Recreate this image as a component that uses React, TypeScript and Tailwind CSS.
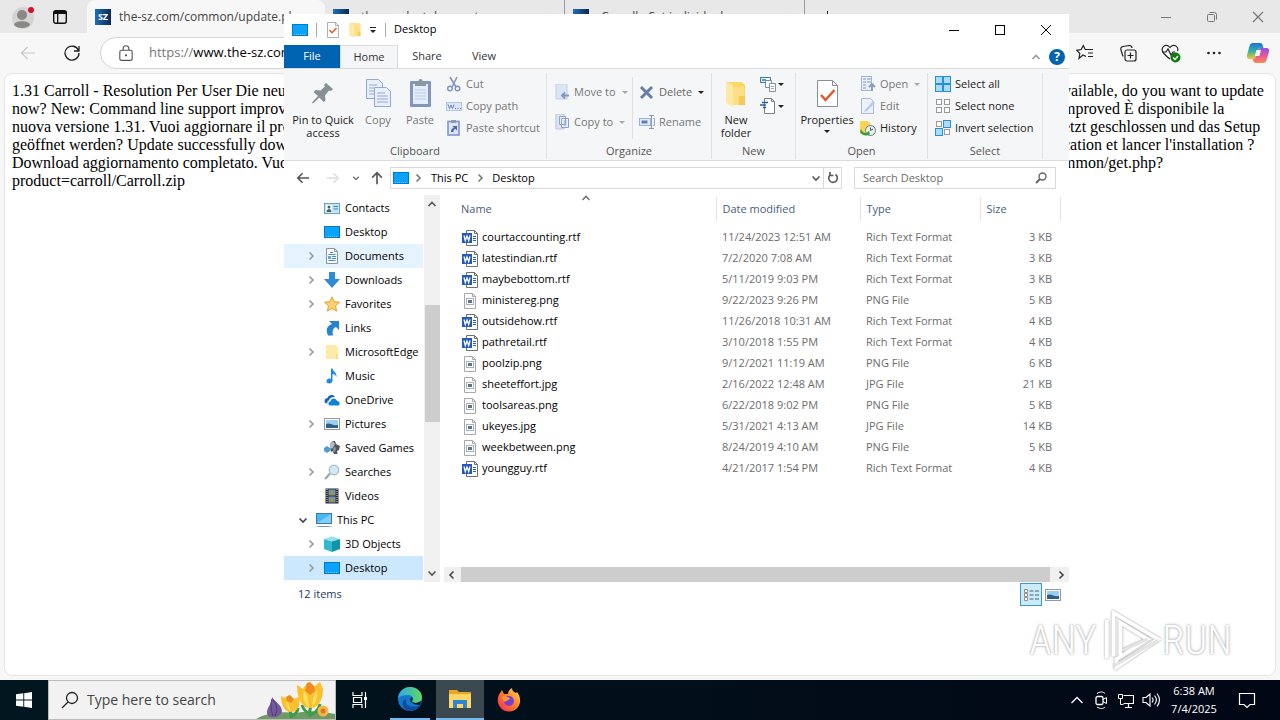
import type { ReactNode } from "react";

type IconProps = { size?: number; className?: string };

const Svg = ({ size = 16, className = "", box = 16, children }: IconProps & { box?: number; children: ReactNode }) => (
  <svg width={size} height={size} viewBox={`0 0 ${box} ${box}`} fill="none" className={`shrink-0 ${className}`} aria-hidden="true">
    {children}
  </svg>
);

const DesktopIcon = (p: IconProps) => (
  <Svg {...p}>
    <rect x="0.5" y="2.5" width="15" height="11" fill="#0aa3fb" stroke="#0078cf" />
    <path d="M2 12.5h12" stroke="#7cc8fb" strokeDasharray="1 1" />
  </Svg>
);

const ContactsIcon = () => (
  <Svg>
    <rect x="0.5" y="3.5" width="15" height="10" fill="#c5e4f5" stroke="#6aa6c4" />
    <rect x="2" y="5" width="6" height="7" fill="#fff" />
    <circle cx="5" cy="7" r="1.5" fill="#3b6a66" />
    <path d="M2.500 12c0-4 5-4 5 0z" fill="#3b6a66" />
    <path d="M9.500 6.500h4.500M9.500 9h4.500" stroke="#3f85b0" />
  </Svg>
);

const DocumentIcon = () => (
  <Svg>
    <path d="M2.500 .5h8l3 3v12h-11z" fill="#fff" stroke="#8b949b" />
    <path d="M10.500 .5v3h3" stroke="#8b949b" />
    <path d="M6 4.500h3M4.500 6.500h7M8 8.500h4M8 10.500h4M4.500 12.500h7" stroke="#3d8fc8" />
    <rect x="4" y="8" width="3" height="3" fill="#5fa9d4" />
  </Svg>
);

const DownloadIcon = () => (
  <Svg>
    <path d="M5 0h6v7h5l-8 9L0 7h5z" fill="#2f8ad8" />
  </Svg>
);

const StarIcon = () => (
  <Svg>
    <path d="m8 .8 2.200 4.900 5.300.6-4 3.500 1.100 5.300L8 12.400l-4.600 2.700 1.100-5.300-4-3.500 5.300-.6z" fill="#ffd26b" stroke="#e39a3a" />
  </Svg>
);

const LinkIcon = () => (
  <Svg>
    <path d="M5 1h10v9l-3-3c-3 1-4 4-3 8.500H4C1.500 10 3 5.500 8 4z" fill="#2583d2" />
  </Svg>
);

const FolderIcon = ({ size = 16, className = "" }: IconProps) => (
  <Svg size={size} className={className}>
    <path d="M2.500 1H12l1.500 1.500V14h-11z" fill="#ffe08a" />
    <path d="M2.500 1 7 3v12.500L2.500 14z" fill="#ffe9a8" />
    <path d="M10.500 9.500h3V14h-3z" fill="#f7cb58" />
  </Svg>
);

const PaleFolderIcon = () => (
  <Svg>
    <path d="M2 1h10l1 1h1v13H2z" fill="#fbeaa8" />
    <path d="M12 10h2v5h-2z" fill="#f5dc86" />
  </Svg>
);

const MusicIcon = () => (
  <Svg>
    <path d="M7 .5h1.500c.5 3 4.500 4 4 8.500-1-2-2-2.800-4-3v6.500c0 4-6 3.800-6 .8C2.500 11 5 10 7 11z" fill="#1a8be0" />
  </Svg>
);

const OneDriveIcon = () => (
  <Svg>
    <path d="M1 11c-1.500-3 1-5 2.500-5C4.500 2.500 9.500 2 11 5 8 4.500 5.500 6 5 8.500 3.500 9 3 10 3.500 11.500z" fill="#1168b8" />
    <path d="M5.500 13.500C3.500 12 4.500 9.500 6.500 9.300 7 5.500 12 5.500 13 9c3 .3 3.500 3.500 1.500 4.500z" fill="#1184d8" />
  </Svg>
);

const PictureIcon = () => (
  <Svg>
    <rect x="0.5" y="2.500" width="15" height="11" fill="#fff" stroke="#8f9aa5" />
    <rect x="2" y="4" width="12" height="8" fill="#9ad0f4" />
    <path d="M2 8c4-2 6 2 12 1v3H2z" fill="#2f5f82" />
  </Svg>
);

const GamesIcon = () => (
  <Svg>
    <path d="M8 1h3l1 3 4 2-1 4-2 1 .5 3H10l-1.500-3-1.500 1-1-4z" fill="#4b565e" />
    <path d="m6 3 3-2 2 3-2 4-3 1z" fill="#aebbc3" />
    <path d="M0 8l3-2 3 2v3l-3 2-3-2z" fill="#4ba0d8" />
    <path d="m9 8 3-1-.5 4-2 2z" fill="#8b979e" />
  </Svg>
);

const LensIcon = () => (
  <Svg>
    <path d="M1 15 6 9.500" stroke="#98a3a8" strokeWidth="2" />
    <circle cx="10" cy="6" r="4.800" fill="#cfeafb" stroke="#94a9b5" />
  </Svg>
);

const VideoIcon = () => (
  <Svg>
    <rect x="1.500" y="0.500" width="13" height="15" fill="#2d2d2d" />
    <path d="M3 1v14M13 1v14" stroke="#e6e6e6" strokeDasharray="1 1" />
    <rect x="4.500" y="1.500" width="7" height="6" fill="#6f93bb" />
    <rect x="4.500" y="8.500" width="7" height="6" fill="#6f93bb" />
    <path d="m5 7 3-4 3 4zM5 14l3-4 3 4z" fill="#a8903e" />
  </Svg>
);

const PcIcon = () => (
  <Svg>
    <rect x="0.5" y="1.500" width="15" height="10" fill="#46b8f5" stroke="#42799b" />
    <path d="M1 11 15 2v9z" fill="#7dd0fb" />
    <path d="M3 14.500h10" stroke="#6c98b0" />
    <path d="M0 14.500h3M13 14.500h3" stroke="#b4c8d2" />
  </Svg>
);

const CubeIcon = () => (
  <Svg>
    <path d="M0 3 8 .5 16 3 8 5.500z" fill="#8fe4ee" />
    <path d="M0 3 8 5.500V16l-8-3z" fill="#31b9cc" />
    <path d="M16 3 8 5.500V16l8-3z" fill="#0e93ab" />
  </Svg>
);

const WordIcon = () => (
  <Svg>
    <path d="M4.500 .5h8l3 3v12h-11z" fill="#fff" stroke="#6a7076" />
    <path d="M12.500 .5v3h3" stroke="#6a7076" />
    <path d="M11 6.500h3M11 8.500h3M11 10.500h3" stroke="#2b5fb4" />
    <rect x="0" y="3" width="10" height="10" fill="#2459b5" />
    <path d="m2 5.500 1.300 5L5 6l1.700 4.500L8 5.500" stroke="#fff" strokeWidth="1.300" />
  </Svg>
);

const ImageFileIcon = () => (
  <Svg>
    <path d="M2.500 .5h8l3 3v12h-11z" fill="#fbfbfb" stroke="#a9a9a9" />
    <path d="M10.500 .5v3h3" stroke="#a9a9a9" />
    <rect x="4.500" y="5.500" width="7" height="6" fill="#fff" stroke="#a9b1ba" />
    <rect x="6" y="7" width="4" height="3" fill="#5f7584" />
  </Svg>
);

const Chevron = ({ dir, className = "" }: { dir: "up" | "down" | "left" | "right"; className?: string }) => {
  const paths = { up: "M1.500 7 5 3.500 8.500 7", down: "M1.500 3.500 5 7l3.500-3.500", left: "M6.500 1.500 3 5l3.500 3.500", right: "M3.500 1.500 7 5 3.500 8.500" };
  return (
    <Svg size={10} box={10} className={className}>
      <path d={paths[dir]} stroke="currentColor" strokeWidth="1.600" />
    </Svg>
  );
};

const Caret = ({ className = "" }: { className?: string }) => (
  <svg width="6" height="3" viewBox="0 0 6 3" className={`shrink-0 ${className}`} aria-hidden="true">
    <path d="M0 0h6L3 3z" fill="currentColor" />
  </svg>
);

const CheckedPage = ({ size, className }: IconProps) => (
  <Svg size={size} className={className}>
    <path d="M2.500 .5h8l3 3v12h-11z" fill="#fff" stroke="#8a8f95" strokeWidth=".7" />
    <path d="M10.500 .5v3h3" stroke="#8a8f95" strokeWidth=".7" />
    <path d="m4.500 8 2.500 2.800L11.500 6" stroke="#e4572a" strokeWidth="1.400" />
  </Svg>
);

const PropertiesIcon = () => (
  <Svg size={32} box={32} className="mb-1">
    <path d="M6.500 3.500h15l5 5v21h-20z" fill="#fff" stroke="#8a8f95" />
    <path d="M21.500 3.500v5h5" stroke="#8a8f95" />
    <path d="m10 18 4.500 5 9-10" stroke="#e4572a" strokeWidth="2.500" />
  </Svg>
);

const SzIcon = () => (
  <span className="flex size-4 shrink-0 items-center justify-center bg-linear-to-r from-[#1d6fb8] to-[#0b2a55] text-[9px] font-bold text-white">SZ</span>
);

const CopilotIcon = () => (
  <Svg size={24} box={24}>
    <defs>
      <linearGradient id="copA" x1="0" y1="0" x2="0" y2="1">
        <stop offset="0" stopColor="#1d6fe0" />
        <stop offset=".5" stopColor="#2fb3a0" />
        <stop offset="1" stopColor="#f5c52c" />
      </linearGradient>
      <linearGradient id="copB" x1="0" y1="0" x2="0" y2="1">
        <stop offset="0" stopColor="#8a55e8" />
        <stop offset=".5" stopColor="#e8559c" />
        <stop offset="1" stopColor="#fb8a4c" />
      </linearGradient>
    </defs>
    <path d="M7 2h7c2 0 2.500 1 3 3l.5 2h-3c-2 0-2.500 1-3 3L10 15c-.5 2-1.500 3-3.500 3H4c-3 0-3.500-2-3-4L3.500 5C4 3 5 2 7 2z" fill="url(#copA)" />
    <path d="M17 22h-7c-2 0-2.500-1-3-3l-.3-1c2 0 2.800-1 3.300-3l1.500-5c.5-2 1.500-3 3.500-3h5c3 0 3.500 2 3 4l-2.500 8c-.5 2-1.500 3-3.500 3z" fill="url(#copB)" />
    <path d="m10.500 9-1.700 6h4.500l1.700-6z" fill="#fff" />
  </Svg>
);

const PAGE_LINES = [
  ["1.31 Carroll - Resolution Per User Die neue", "vailable, do you want to update"],
  ["now? New: Command line support improved", "mproved È disponibile la"],
  ["nuova versione 1.31. Vuoi aggiornare il pro", "etzt geschlossen und das Setup"],
  ["geöffnet werden? Update successfully down", "cation et lancer l'installation ?"],
  ["Download aggiornamento completato. Vuoi", "mmon/get.php?"],
  ["product=carroll/Carroll.zip", ""],
];

const TREE: { name: string; icon: ReactNode; arrow?: boolean; state?: string }[] = [
  { name: "Contacts", icon: <ContactsIcon /> },
  { name: "Desktop", icon: <DesktopIcon /> },
  { name: "Documents", icon: <DocumentIcon />, arrow: true, state: "bg-[#e5f3ff]" },
  { name: "Downloads", icon: <DownloadIcon />, arrow: true },
  { name: "Favorites", icon: <StarIcon />, arrow: true },
  { name: "Links", icon: <LinkIcon /> },
  { name: "MicrosoftEdge", icon: <PaleFolderIcon />, arrow: true },
  { name: "Music", icon: <MusicIcon /> },
  { name: "OneDrive", icon: <OneDriveIcon /> },
  { name: "Pictures", icon: <PictureIcon />, arrow: true },
  { name: "Saved Games", icon: <GamesIcon /> },
  { name: "Searches", icon: <LensIcon />, arrow: true },
  { name: "Videos", icon: <VideoIcon /> },
];

const DRIVE_TREE = [
  { name: "3D Objects", icon: <CubeIcon />, state: "" },
  { name: "Desktop", icon: <DesktopIcon />, state: "bg-[#cce8ff]" },
];

const FILES = [
  ["courtaccounting.rtf", "11/24/2023 12:51 AM", "3 KB"],
  ["latestindian.rtf", "7/2/2020 7:08 AM", "3 KB"],
  ["maybebottom.rtf", "5/11/2019 9:03 PM", "3 KB"],
  ["ministereg.png", "9/22/2023 9:26 PM", "5 KB"],
  ["outsidehow.rtf", "11/26/2018 10:31 AM", "4 KB"],
  ["pathretail.rtf", "3/10/2018 1:55 PM", "4 KB"],
  ["poolzip.png", "9/12/2021 11:19 AM", "6 KB"],
  ["sheeteffort.jpg", "2/16/2022 12:48 AM", "21 KB"],
  ["toolsareas.png", "6/22/2018 9:02 PM", "5 KB"],
  ["ukeyes.jpg", "5/31/2021 4:13 AM", "14 KB"],
  ["weekbetween.png", "8/24/2019 4:10 AM", "5 KB"],
  ["youngguy.rtf", "4/21/2017 1:54 PM", "4 KB"],
];

const FILE_TYPES: Record<string, string> = { rtf: "Rich Text Format", png: "PNG File", jpg: "JPG File" };

const BrowserTabs = () => (
  <div className="flex h-[33px] shrink-0 items-stretch bg-[#e8e8e8] text-xs text-[#444]">
    <div className="flex w-[87px] shrink-0 items-center gap-4 pl-3">
      <button aria-label="Profile">
        <Svg size={24} box={24}>
          <circle cx="11" cy="13" r="11" fill="#d6d4d2" />
          <circle cx="10" cy="10" r="5" fill="#8a8886" />
          <path d="M2 20c0-5 16-5 16 0-3 4-13 4-16 0z" fill="#8a8886" />
          <circle cx="19" cy="5" r="3" fill="#d3122a" />
        </Svg>
      </button>
      <button aria-label="Tab actions">
        <Svg>
          <rect x="1.700" y="1.700" width="12.600" height="12.600" rx="2" stroke="#111" strokeWidth="1.400" />
          <path d="M2 2h12v3H2z" fill="#111" />
          <path d="M5.700 4v10" stroke="#111" strokeWidth="1.300" />
        </Svg>
      </button>
    </div>
    <div className="flex w-[238px] shrink-0 items-center gap-2 rounded-t-lg bg-[#f7f7f7] pl-2">
      <SzIcon />
      <span className="flex-1 truncate">the-sz.com/common/update.php</span>
    </div>
    <div className="flex w-60 shrink-0 items-center gap-2 border-r border-[#999] pl-2">
      <SzIcon />
      <span className="flex-1 truncate pl-1">the product does not</span>
      <span className="pr-3">×</span>
    </div>
    <div className="flex w-60 shrink-0 items-center gap-2 border-r border-[#999] pl-2">
      <SzIcon />
      <span className="flex-1 truncate pl-1">Carroll - Set individual screen</span>
      <span className="pr-3">×</span>
    </div>
    <button aria-label="New tab" className="pl-4">
      <Svg size={12} box={12}><path d="M6.500 0v12M0 6.500h12" stroke="#222" /></Svg>
    </button>
    <div className="ml-auto flex w-[140px] items-center justify-between pr-4 pl-5 text-[#777]">
      <button aria-label="Minimize browser">
        <Svg size={12} box={12}><path d="M1 6.500h10" stroke="currentColor" /></Svg>
      </button>
      <button aria-label="Restore browser">
        <Svg size={12} box={12}>
          <rect x="1.500" y="3.500" width="7" height="7" rx="1" stroke="currentColor" />
          <path d="M3.500 1.500h5q2 0 2 2v5" stroke="currentColor" />
        </Svg>
      </button>
      <button aria-label="Close browser">
        <Svg size={12} box={12}><path d="m1 1 10 10M11 1 1 11" stroke="currentColor" strokeWidth="1.200" /></Svg>
      </button>
    </div>
  </div>
);

const BrowserToolbar = () => (
  <div className="flex h-10 shrink-0 items-center bg-[#f7f7f7]">
    <button aria-label="Back" className="ml-5 w-11 text-[#c8c8c8]">
      <Svg><path d="M15 8H1.500M7.500 2l-6 6 6 6" stroke="currentColor" strokeWidth="1.200" /></Svg>
    </button>
    <button aria-label="Refresh" className="w-9 text-[#222]">
      <Svg><path d="M14.500 5.500A7 7 0 1 0 15 8M15 1v5h-5" stroke="currentColor" strokeWidth="1.300" /></Svg>
    </button>
    <div className="flex h-8 flex-1 items-center gap-3.5 rounded-full border border-[#d4d4d4] bg-white pl-4">
      <Svg size={18} box={16}>
        <rect x="2.500" y="5.500" width="11" height="9" rx="1.500" stroke="#555" />
        <path d="M5.500 5.500V4a2.500 2.500 0 0 1 5 0v1.500" stroke="#555" />
        <circle cx="8" cy="10" r="1" fill="#555" />
      </Svg>
      <span className="text-[13px] text-[#777]">
        https://<span className="text-black">www.the-sz.com</span>
      </span>
    </div>
    <div className="flex w-[212px] shrink-0 items-center justify-between pr-2.5 pl-2 text-[#222]">
      <button aria-label="Favorites">
        <Svg size={18} box={18}>
          <path d="M10 12.500 7 11l-4 3.500.8-5L.8 6.300l4.400-.8L7.300 1.500l2 4H17M12 9h5M12 12.500h5" stroke="currentColor" strokeWidth="1.200" />
        </Svg>
      </button>
      <button aria-label="Collections">
        <Svg size={18} box={18}>
          <rect x="6" y="6" width="11" height="11" rx="2" stroke="currentColor" strokeWidth="1.200" />
          <path d="M11.500 8.500v6M8.500 11.500h6M4 12.500 2 6c-.7-2 0-3 2-3.500l6-1c2 0 3 .5 3 2.500" stroke="currentColor" strokeWidth="1.200" />
        </Svg>
      </button>
      <button aria-label="Browser essentials">
        <Svg size={20} box={20}>
          <path d="M9 16C1 10 0 7 2 4c2-2.500 5-2 7 .5C11 2 14 1.500 16 4c1 1.500 1 3 .5 4M1 9h4l2-3 3 6 2-3h2" stroke="currentColor" strokeWidth="1.200" />
          <circle cx="14.500" cy="14.500" r="5" fill="#107c10" />
          <path d="m12 14.500 2 2 3-3.500" stroke="#fff" strokeWidth="1.300" />
        </Svg>
      </button>
      <button aria-label="Settings and more">
        <Svg><g fill="currentColor"><circle cx="2.500" cy="8" r="1.300" /><circle cx="8" cy="8" r="1.300" /><circle cx="13.500" cy="8" r="1.300" /></g></Svg>
      </button>
      <button aria-label="Copilot"><CopilotIcon /></button>
    </div>
  </div>
);

const GreyAction = ({ icon, label, caret }: { icon: ReactNode; label: string; caret?: boolean }) => (
  <button className="flex h-[22px] items-center gap-1 whitespace-nowrap text-[#777]">
    {icon}
    {label}
    {caret && <Caret className="ml-0.5 text-[#aaa]" />}
  </button>
);

const Group = ({ label, className, children }: { label: string; className: string; children: ReactNode }) => (
  <section className={`flex shrink-0 flex-col ${className}`}>
    <div className="mt-1 mb-px flex flex-1 flex-col border-r border-[#dfe1e3]">
      <div className="flex flex-1">{children}</div>
      <h3 className="text-center leading-4 text-[#555]">{label}</h3>
    </div>
  </section>
);

const SelectGlyph = ({ on }: { on: boolean[] }) => (
  <Svg>
    {[[1, 1], [9, 1], [1, 9], [9, 9]].map(([x, y], i) => (
      <rect
        key={i}
        x={on[i] ? x - 0.5 : x + 0.5}
        y={on[i] ? y - 0.5 : y + 0.5}
        width={on[i] ? 7 : 5}
        height={on[i] ? 7 : 5}
        fill={on[i] ? "#a9dbfa" : "#fff"}
        stroke={on[i] ? "#2b8fd6" : "#9a9a9a"}
      />
    ))}
  </Svg>
);

const Ribbon = () => (
  <div className="flex h-[93px] overflow-hidden border-y border-[#dadbdc] bg-[#f5f6f7] text-[#222]">
    <Group label="Clipboard" className="w-[263px]">
      <button className="flex w-[78px] flex-col items-center pt-1 leading-[13px]">
        <Svg size={32} box={32} className="mb-1">
          <path d="m19 6 7 6-2 2-2-.5-4 5 .5 5-2 1.500-4-4.500-6.500 6-1-1 6-6.500-4.500-4 2-2 5 .5 4.500-4-1-1.500z" fill="#879094" />
        </Svg>
        Pin to Quick access
      </button>
      <button className="flex w-8 flex-col items-center pt-1 leading-[13px] text-[#777]">
        <Svg size={32} box={32} className="mb-1">
          <g fill="#e9effa" stroke="#93a9d4">
            <path d="M4.500 2.500h12l4 4v15h-16z" />
            <path d="M12.500 10.500h12l4 4v15h-16z" />
          </g>
          <path d="M7 8h8M7 11h5M7 14h5M7 17h5M15 16h8M15 19h11M15 22h11M15 25h11" stroke="#93a9d4" />
        </Svg>
        Copy
      </button>
      <button className="flex w-[52px] flex-col items-center pt-1 leading-[13px] text-[#777]">
        <Svg size={32} box={32} className="mb-1">
          <rect x="6" y="4" width="21" height="26" rx="1" fill="#8195bd" />
          <path d="M9 7h15v20H9z" fill="#e4ecfa" />
          <path d="M11 5h11v4H11z" fill="#8b979f" />
          <circle cx="16.500" cy="4" r="2" fill="#8b979f" />
          <path d="M11 13h11M11 16h11M11 19h11M11 22h11" stroke="#b8c9e8" />
        </Svg>
        Paste
      </button>
      <div className="flex flex-col">
        <GreyAction label="Cut" icon={<Svg><path d="m4 1 6 10M11 1 6 11" stroke="#8797b5" strokeWidth="1.600" /><circle cx="4" cy="12.500" r="2.300" stroke="#7f93bb" strokeWidth="1.400" /><circle cx="11.500" cy="12.500" r="2.300" stroke="#7f93bb" strokeWidth="1.400" /></Svg>} />
        <GreyAction label="Copy path" icon={<Svg><rect x="0.500" y="4.500" width="15" height="8" fill="#dbe5f6" stroke="#b5c6e6" /><path d="m2 6.500 1.500 4L5 7l1.500 3.500L8 6.500M9 10.500h1M11.500 10.500h1M14 10.500h1" stroke="#6f86b8" /></Svg>} />
        <GreyAction label="Paste shortcut" icon={<Svg><rect x="2" y="1.500" width="11" height="13.500" fill="#dce6f7" stroke="#7f96c6" strokeWidth="1.600" /><path d="M5 0h5v3H5z" fill="#8899b5" /><path d="M5 12c0-3 1-4 3-4L6.500 6H11v4.500L9.500 9C8 9 7.500 10 7.500 12z" fill="#4a69ad" /></Svg>} />
      </div>
    </Group>
    <Group label="Organize" className="w-[165px]">
      <div className="flex w-[85px] flex-col gap-2 pt-2 pl-2">
        <GreyAction label="Move to" caret icon={<Svg className="-mr-px"><path d="M1 0h11v15H1z" fill="#dbe5f4" stroke="#c1cfe6" /><path d="M14 11.500H7M10 8.500l-3 3 3 3" stroke="#7f96c4" strokeWidth="1.800" /></Svg>} />
        <GreyAction label="Copy to" caret icon={<Svg className="-mr-px"><path d="M1 0h8v15H1z" fill="#dbe5f4" stroke="#b5c5e0" /><path d="M4.500 2.500h6v8h-6zM6.500 4.500h7v9h-7z" fill="#eff4fc" stroke="#8ba1cc" /><path d="M8.500 7h3M8.500 9h3M8.500 11h3" stroke="#8ba1cc" /></Svg>} />
      </div>
      <div className="my-1 w-px bg-[#dfe1e3]" />
      <div className="flex flex-col gap-2 pt-2 pl-1.5">
        <button className="flex h-[22px] items-center gap-1 text-[#666]">
          <Svg><path d="m2 3 11 11M13 3 2 14" stroke="#657da8" strokeWidth="3" /></Svg>
          Delete
          <Caret className="ml-0.5 text-[#222]" />
        </button>
        <GreyAction label="Rename" icon={<Svg><rect x="0.500" y="4.500" width="11" height="7" fill="#e4ecf9" stroke="#9db2d8" /><path d="M2.500 8h6" stroke="#5d7cb8" strokeWidth="3" /><path d="M12.500 1.500v13M10 1.500h5M10 14.500h5" stroke="#8799bd" /><path d="M14 4.500h1.500v7H14" stroke="#9db2d8" /></Svg>} />
      </div>
    </Group>
    <Group label="New" className="w-[84px]">
      <button className="flex w-12 flex-col items-center pt-1 leading-[13px]">
        <Svg size={32} box={32} className="mb-1">
          <path d="M6 5h16l3 3v15H6z" fill="#fbd768" />
          <path d="m6 5 7 3v22l-7-4z" fill="#ffe9a6" />
          <path d="M13 10h11v18H13z" fill="#ffdf85" />
          <path d="M19 19h6v9h-6z" fill="#f7ca55" />
        </Svg>
        New folder
      </button>
      <div className="flex flex-col">
        <button aria-label="New item" className="flex h-[22px] items-center gap-0.5">
          <Svg><path d="M.5 1.500h10v5H.5z" fill="#fff" stroke="#2e7ba8" /><path d="M2 3h4v2H2z" fill="#38a2d8" /><path d="M5.500 4.500h6v7h-6z" fill="#fff" stroke="#7a8f9c" /><path d="M9.500 7.500h6v8h-6z" fill="#fff" stroke="#84909a" /><path d="M11 10.500h3M11 12.500h3" stroke="#9aa" /></Svg>
          <Caret />
        </button>
        <button aria-label="Easy access" className="flex h-[22px] items-center gap-0.5">
          <Svg><path d="M4.500 .5h7l3 3v12h-10z" fill="#fff" stroke="#7a8088" /><path d="M11.500 .5v3h3" stroke="#7a8088" /><path d="M2 4.500h6M0 7h6M3 9.500h3" stroke="#2a5d9c" strokeWidth="1.300" /></Svg>
          <Caret />
        </button>
      </div>
    </Group>
    <Group label="Open" className="w-[132px]">
      <button className="flex w-[62px] flex-col items-center pt-1 leading-[13px]">
        <PropertiesIcon />
        Properties
        <Caret className="mt-1" />
      </button>
      <div className="flex flex-col pl-0.5">
        <GreyAction label="Open" caret icon={<Svg><rect x="1.500" y="0.500" width="10" height="14" fill="#eaf0fa" stroke="#a3b5d8" /><path d="M3 3h3M3 6h3M3 9h3M3 12h3M7 3h4M7 6h4" stroke="#7d96c8" /><path d="M12 15V8M9 11l3-3 3 3" stroke="#8498c0" strokeWidth="1.800" /></Svg>} />
        <GreyAction label="Edit" icon={<Svg><path d="M1.500 .5h9l3 3v12h-12z" fill="#edf2fa" stroke="#a9b9d6" /><path d="m5 12 8-9 2 2-8 8-3 1z" fill="#b9c9e6" /></Svg>} />
        <button className="flex h-[22px] items-center gap-1">
          <Svg><path d="M0 1h8l2 2v11H0z" fill="#fbd44f" /><circle cx="10.500" cy="10.500" r="5" fill="#e9eef0" stroke="#6b7a80" /><path d="M10.500 10.500V7.500M10.500 10.500 13 9" stroke="#555" /><path d="M1 9c2 5 5 5 8 2l1 3c-4 3-8 1-10-2z" fill="#2f9e3b" /></Svg>
          History
        </button>
      </div>
    </Group>
    <Group label="Select" className="w-[115px]">
      <div className="flex flex-col pl-[7px]">
        <button className="flex h-[22px] items-center gap-1"><SelectGlyph on={[true, true, true, true]} />Select all</button>
        <button className="flex h-[22px] items-center gap-1"><SelectGlyph on={[false, false, false, false]} />Select none</button>
        <button className="flex h-[22px] items-center gap-1 whitespace-nowrap"><SelectGlyph on={[false, true, true, false]} />Invert selection</button>
      </div>
    </Group>
  </div>
);

const TreeRow = ({ name, icon, arrow, state = "" }: { name: string; icon: ReactNode; arrow?: boolean; state?: string }) => (
  <li className={`flex h-6 items-center pl-[22px] ${state}`}>
    <span className="w-[18px] shrink-0 text-[#999]">{arrow && <Chevron dir="right" />}</span>
    {icon}
    <span className="ml-[5px] whitespace-nowrap">{name}</span>
  </li>
);

const Explorer = () => (
  <main className="absolute top-3.5 right-[211px] left-[284px] flex flex-col bg-white text-[11px] text-black">
    <header className="flex h-[31px] items-center pl-2">
      <DesktopIcon />
      <span className="mx-2 h-3.5 w-px bg-[#aaa]" />
      <CheckedPage />
      <FolderIcon className="ml-1.5" />
      <Svg size={8} box={8} className="ml-1.5"><path d="M1 1.500h6" stroke="#222" /><path d="M1 4h6L4 7z" fill="#222" /></Svg>
      <span className="mx-2 h-3.5 w-px bg-[#aaa]" />
      <h1>Desktop</h1>
      <div className="ml-auto flex">
        <button aria-label="Minimize" className="flex w-[46px] justify-center"><Svg size={10} box={10}><path d="M0 5.500h10" stroke="#000" /></Svg></button>
        <button aria-label="Maximize" className="flex w-[46px] justify-center"><Svg size={10} box={10}><rect x=".5" y=".5" width="9" height="9" stroke="#000" /></Svg></button>
        <button aria-label="Close" className="flex w-[46px] justify-center"><Svg size={10} box={10}><path d="m0 0 10 10M10 0 0 10" stroke="#000" /></Svg></button>
      </div>
    </header>
    <nav className="flex h-[23px] items-stretch text-[#333]">
      <button className="w-14 bg-[#0063b1] text-white">File</button>
      <button className="-mb-px w-[58px] border-x border-t border-[#dadbdc] bg-[#f5f6f7]">Home</button>
      <button className="w-[58px]">Share</button>
      <button className="w-14">View</button>
      <div className="ml-auto flex items-center gap-2 pr-1">
        <button aria-label="Collapse ribbon" className="text-[#999]"><Chevron dir="up" /></button>
        <button aria-label="Help" className="flex size-4 items-center justify-center rounded-full bg-[#0063b1] text-xs font-bold text-white">?</button>
      </div>
    </nav>
    <Ribbon />
    <div className="flex h-[34px] items-center gap-3 pr-[13px]">
      <div className="flex flex-1 items-center">
        <button aria-label="Back" className="w-[42px] pl-3 text-[#555]"><Svg size={14}><path d="M15 8H2M7.500 2.500 2 8l5.500 5.500" stroke="currentColor" strokeWidth="1.800" /></Svg></button>
        <button aria-label="Forward" className="w-[26px] text-[#ddd]"><Svg size={14}><path d="M1 8h13M8.500 2.500 14 8l-5.500 5.500" stroke="currentColor" strokeWidth="1.800" /></Svg></button>
        <button aria-label="Recent locations" className="w-[18px] text-[#777]"><Svg size={8} box={10}><path d="M1.500 3.500 5 7l3.500-3.500" stroke="currentColor" strokeWidth="1.800" /></Svg></button>
        <button aria-label="Up" className="w-5 text-[#555]"><Svg size={14}><path d="M8 15V2M2.500 7.500 8 2l5.500 5.500" stroke="currentColor" strokeWidth="1.900" /></Svg></button>
        <div className="flex h-[22px] flex-1 items-center border border-[#d9d9d9] pl-0.5">
          <DesktopIcon />
          <Chevron dir="right" className="mr-2 ml-1 text-[#777]" />
          <a href="#this-pc">This PC</a>
          <Chevron dir="right" className="mx-[7px] text-[#777]" />
          <a href="#desktop">Desktop</a>
          <button aria-label="Previous locations" className="ml-auto pr-0.5 text-[#555]"><Chevron dir="down" /></button>
          <button aria-label="Refresh Desktop" className="flex h-full w-[18px] items-center justify-center border-l border-[#d9d9d9] text-[#555]">
            <Svg size={12} box={12}><path d="M8.500 2.500A4.300 4.300 0 1 1 3 3M3 0v3.500h3.500" stroke="currentColor" strokeWidth="1.600" /></Svg>
          </button>
        </div>
      </div>
      <label className="flex h-[22px] w-[202px] items-center border border-[#d9d9d9] px-2">
        <input type="text" aria-label="Search Desktop" placeholder="Search Desktop" className="min-w-0 flex-1 outline-none placeholder:text-[#6d6d6d]" />
        <Svg size={12} box={12}><circle cx="7.500" cy="4.500" r="3.500" stroke="#666" strokeWidth="1.400" /><path d="M5 7 1 11" stroke="#666" strokeWidth="2" /></Svg>
      </label>
    </div>
    <div className="flex h-[387px]">
      <aside className="flex w-[160px] shrink-0 gap-px pr-1">
        <ul className="flex-1 overflow-hidden pt-px">
          {TREE.map((item) => <TreeRow key={item.name} {...item} />)}
          <li>
            <div className="flex h-6 items-center pl-3.5">
              <Chevron dir="down" className="text-[#444]" />
              <span className="ml-2"><PcIcon /></span>
              <span className="ml-[5px]">This PC</span>
            </div>
            <ul>
              {DRIVE_TREE.map((item) => <TreeRow key={item.name} arrow {...item} />)}
            </ul>
          </li>
        </ul>
        <div className="flex w-4 flex-col items-center bg-[#f0f0f0] py-1 text-[#555]">
          <Chevron dir="up" />
          <div className="mt-24 h-[117px] w-[15px] bg-[#cdcdcd]" />
          <Chevron dir="down" className="mt-auto" />
        </div>
      </aside>
      <div className="flex min-w-0 flex-1 flex-col">
        <div className="relative flex-1 pt-0.5">
          <table className="w-[616px] table-fixed border-collapse text-left">
            <thead>
              <tr className="h-6 text-[#4c607a]">
                <th className="w-[272px] border-r border-[#e5e5e5] pl-[17px] font-normal">Name</th>
                <th className="w-36 border-r border-[#e5e5e5] pl-1.5 font-normal">Date modified</th>
                <th className="w-[120px] border-r border-[#e5e5e5] pl-1.5 font-normal">Type</th>
                <th className="w-20 border-r border-[#e5e5e5] pl-1.5 font-normal">Size</th>
              </tr>
            </thead>
            <tbody className="text-[#6d6d6d] before:block before:h-1.5">
              {FILES.map(([name, date, size]) => {
                const ext = name.slice(-3);
                return (
                  <tr key={name} className="h-[21px]">
                    <td className="pl-[18px] text-black">
                      <span className="flex items-center gap-1">
                        {ext === "rtf" ? <WordIcon /> : <ImageFileIcon />}
                        {name}
                      </span>
                    </td>
                    <td className="pl-1.5 whitespace-nowrap">{date}</td>
                    <td className="pl-1.5 whitespace-nowrap">{FILE_TYPES[ext]}</td>
                    <td className="pr-2 text-right">{size}</td>
                  </tr>
                );
              })}
            </tbody>
          </table>
          <Chevron dir="up" className="absolute -top-0.5 left-[137px] text-[#777]" />
        </div>
        <div className="flex h-[15px] items-center gap-1 bg-[#f0f0f0] px-[3px] text-[#444]">
          <Chevron dir="left" />
          <div className="h-full flex-1 bg-[#cdcdcd]" />
          <Chevron dir="right" className="ml-0.5" />
        </div>
      </div>
    </div>
    <footer className="flex h-[25px] items-center justify-between pr-2 pl-3.5 text-[#1e395b]">
      <span>12 items</span>
      <div className="flex items-center gap-[3px]">
        <button aria-label="Details view" className="flex h-[23px] w-[22px] items-center justify-center border border-[#3d9bc9] bg-[#c9ebfa]">
          <Svg><path d="M1.500 2.500h3v3h-3zM1.500 6.500h3v3h-3zM1.500 10.500h3v3h-3z" fill="#fff" stroke="#9b8a86" /><path d="M6.500 4h4M12 4h4M6.500 8h4M12 8h4M6.500 12h4M12 12h4" stroke="#4c6370" /></Svg>
        </button>
        <button aria-label="Thumbnail view"><PictureIcon /></button>
      </div>
    </footer>
  </main>
);

const Watermark = () => (
  <div className="absolute right-12 bottom-12 flex items-center gap-1 font-['Roboto_Condensed','Liberation_Sans',sans-serif] text-[40px] leading-none font-light text-white [text-shadow:0_0_3px_#aaa,0_0_2px_#bbb]">
    <span>ANY</span>
    <svg width="62" height="62" viewBox="0 0 64 64" fill="none" className="-mr-1 drop-shadow-[0_0_1px_#999]" aria-hidden="true">
      <path d="M13 48V3l46 27-43 29v-8l32-21-28-17v35" stroke="#fff" strokeWidth="4" />
      <path d="M6 10v40" stroke="#fff" strokeWidth="4" />
      <path d="m13 58 46-27M22 42l26-12" stroke="#e3e3e3" strokeWidth="3" />
    </svg>
    <span>RUN</span>
  </div>
);

const Taskbar = () => (
  <footer className="flex h-10 shrink-0 items-stretch bg-linear-to-r from-[#01161e] to-[#020716] text-white">
    <button aria-label="Start" className="flex w-12 items-center justify-center">
      <Svg><path d="M0 2.300 7.300 1.300v6.200H0zM8.200 1.200 16 0v7.500H8.200zM0 8.500h7.300v6.200L0 13.700zM8.200 8.500H16V16l-7.800-1.200z" fill="#fff" /></Svg>
    </button>
    <label className="flex w-72 shrink-0 items-center border border-[#bbb] bg-[#f2f2f2] pl-3">
      <Svg size={18} box={18}><circle cx="11" cy="7" r="5.500" stroke="#222" strokeWidth="1.300" /><path d="m7 11-6 6" stroke="#222" strokeWidth="1.300" /></Svg>
      <input type="text" aria-label="Type here to search" placeholder="Type here to search" className="w-[177px] bg-transparent pl-2 text-sm outline-none placeholder:text-[#444]" />
      <svg width="79" height="38" viewBox="0 0 79 38" className="shrink-0" aria-hidden="true">
        <path d="M0 38c10-6 24-8 40-6 14-3 26-2 39 1v5z" fill="#6f9a63" />
        <path d="M54 36c-1-6 0-9 1-12M35 37c0-4-1-7-1-9M54 34c5-1 9-6 10-11M54 33c-4-2-7-5-8-9M35 36c4-2 7-6 7-9" stroke="#3f9b4a" strokeWidth="3" fill="none" />
        <path d="M11 32c0-7 5-8 5-16 3 5 10 8 10 14-1 7-14 9-15 2z" fill="#725a9c" />
        <path d="M16 18c-2 6-1 11 1 17M17 19c4 4 5 10 2 16" stroke="#4c3a72" fill="none" />
        <path d="M41 4l6 4 4-6 5 5 8-6 3 7c0 12-5 19-13 19S41 18 41 4z" fill="#fbc02d" />
        <path d="M48 10c-2 6 0 12 5 16-1-7-1-12-5-16zM61 9c1 7-1 13-5 17 1-7 1-12 5-17z" fill="#ffdf60" />
        <path d="m51 2 3-1 4 4 1 5-5 4-5-4z" fill="#f08c1d" />
        <path d="M25 15l4 2 4-3 4 4 6-2c2 9-2 15-8 15s-10-6-10-16z" fill="#fbc02d" />
        <path d="m30 16 4-2 4 4-3 4-4-2z" fill="#f08c1d" />
        <path d="M30 20c0 4 1 7 4 10 0-4-1-7-4-10z" fill="#ffdf60" />
        <circle cx="67" cy="30" r="5.500" fill="#f6b845" />
        <circle cx="67" cy="30" r="2.500" fill="#d8762c" />
      </svg>
    </label>
    <button aria-label="Task View" className="flex w-12 items-center justify-center">
      <Svg><path d="M1 0v3.500h9V0M1 16v-3.500h9V16M1.500 5.500h8v5h-8zM13.500 0v16" stroke="#fff" strokeWidth="1.200" /><path d="M12 5h3v3h-3z" fill="#fff" /></Svg>
    </button>
    <button aria-label="Microsoft Edge" className="flex w-[52px] items-stretch px-1.5">
      <span className="flex flex-1 items-center justify-center border-b-2 border-[#76b9ed]">
        <Svg size={24} box={24}>
          <defs><linearGradient id="edgeTop"><stop stopColor="#2aa9e6" /><stop offset="1" stopColor="#62d862" /></linearGradient></defs>
          <circle cx="12" cy="12" r="12" fill="#1378cc" />
          <path d="M0 11C1 4 6 0 12 0c7 0 12 5 12 10 0 4-3 6-7 6-3 0-4-1-3-2 2-2 1-6-4-6-5 0-8 1-10 3z" fill="url(#edgeTop)" />
          <path d="M8 12c-1 6 4 10 14 6-3 5-8 6-12 6-7-3-7-11-2-12z" fill="#0d4f9e" />
          <path d="M13.500 15c-2-1-1-4 0-5 2 2 1 3 .5 4 0 2 5 3 9 0l-1 4c-4 0-7-1-8.500-3z" fill="#02151d" />
        </Svg>
      </span>
    </button>
    <button aria-label="File Explorer" className="flex w-12 items-center justify-center border-b-2 border-[#76b9ed] bg-[#3b484f]">
      <Svg size={22} box={22}>
        <path d="M0 2h8l2 2h12v16H0z" fill="#e9a823" />
        <path d="M0 6h22v14H0z" fill="#ffd768" />
        <path d="M4 20v-8h14v8h-4v-4H8v4z" fill="#2f86d0" />
      </Svg>
    </button>
    <button aria-label="Firefox" className="flex w-[50px] items-center justify-center">
      <Svg size={24} box={24}>
        <defs><linearGradient id="fox" x1="1" y1="0" x2="0" y2="1"><stop stopColor="#ffe14a" /><stop offset=".5" stopColor="#ff7a2b" /><stop offset="1" stopColor="#f4215a" /></linearGradient></defs>
        <path d="M3 5l2-3 2 4 4 0c0-3 2-5 4-6 0 3 2 4 4 5l1-1c4 5 4 11 1 15-4 6-14 6-18 0C0 15 0 9 3 5z" fill="url(#fox)" />
        <circle cx="12" cy="13" r="5" fill="#7b3fd0" />
        <path d="M5 9c3-2 5 0 8 1-1 3-4 2-5 4-2-1-3-3-3-5z" fill="#ff9a2e" />
      </Svg>
    </button>
    <div className="ml-auto flex items-center gap-2 pr-6">
      <button aria-label="Show hidden icons"><Svg size={14} box={14}><path d="m1.500 10 5.500-5.500 5.500 5.500" stroke="#fff" strokeWidth="1.300" /></Svg></button>
      <Svg size={18} box={18}><rect x="4" y="5.500" width="7" height="8" rx="1.500" stroke="#fff" strokeWidth="1.300" /><path d="m11 8.500 3.500-2v6l-3.500-2M5 2.500c3-2 6-2 8 0M5 16c3 2 6 2 8 0" stroke="#fff" /></Svg>
      <Svg size={16}><path d="M5.500 3.500h10v8h-10M10.500 12v3M7 15.500h7" stroke="#fff" strokeWidth="1.200" /><path d="M.5 2.500h4v4h-4zM2.500 6.500v6h3" stroke="#fff" /></Svg>
      <Svg size={18} box={18}><path d="M1 6.500h3l4-3.500v12l-4-3.500H1zM10 6.500c1.300 1.500 1.300 3.500 0 5M12.500 4.500c2.500 3 2.500 6 0 9M15 2.500c3 4 3 9 0 13" stroke="#fff" strokeWidth="1.100" /></Svg>
      <div className="ml-0.5 w-12 text-center text-[11px] leading-[18px] whitespace-nowrap">
        <div>6:38 AM</div>
        <div>7/4/2025</div>
      </div>
      <button aria-label="Notifications" className="ml-3"><Svg size={18} box={18}><path d="M1.500 2.500h15v11H12l-3 3-3-3H1.500z" stroke="#fff" strokeWidth="1.200" /></Svg></button>
    </div>
  </footer>
);

const App = () => {
  return (
    <div className="relative flex h-screen flex-col overflow-hidden bg-[#f7f7f7] font-['Open_Sans',sans-serif]">
      <BrowserTabs />
      <BrowserToolbar />
      <div className="relative mx-1 mb-1 flex-1 rounded-lg border border-[#e4e4e4] bg-white px-[7px] pt-2 font-['Liberation_Serif',serif] text-base leading-[18px] text-black">
        {PAGE_LINES.map(([start, end]) => (
          <p key={start} className="flex justify-between whitespace-nowrap">
            <span>{start}</span>
            <span className="w-[205px]">{end}</span>
          </p>
        ))}
      </div>
      <Taskbar />
      <Explorer />
      <div className="pointer-events-none absolute inset-x-0 bottom-0">
        <Watermark />
      </div>
    </div>
  );
};

export default App;
